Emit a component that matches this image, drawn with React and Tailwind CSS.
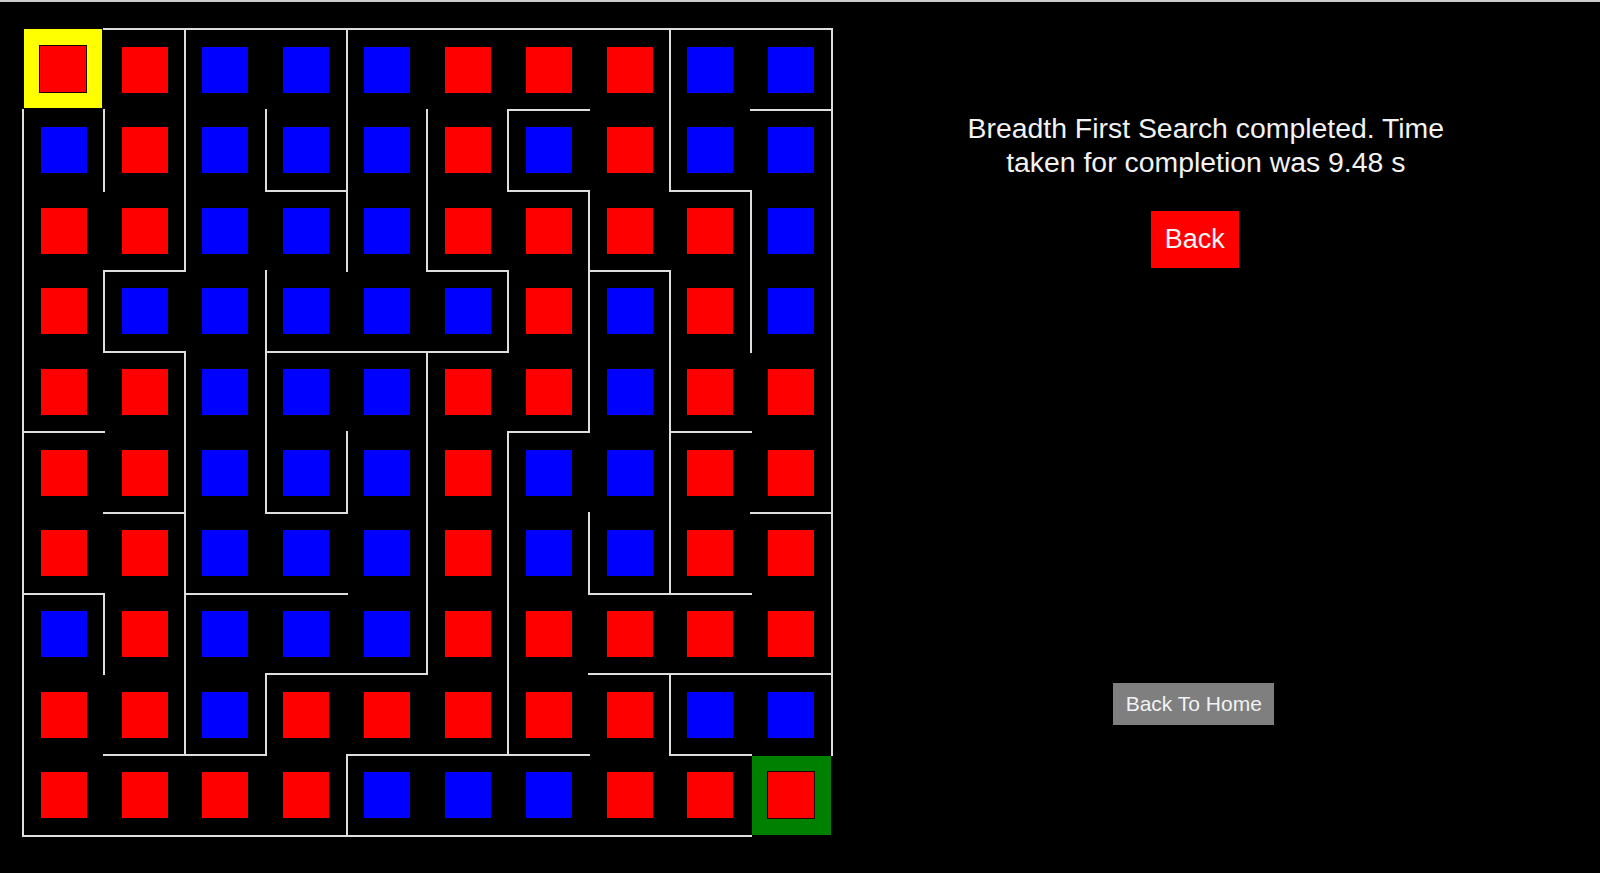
import React from 'react';

// maze colours, one string per row (R = red, B = blue)
const cellColors = [
  'RRBBBRRRBB',
  'BRBBBRBRBB',
  'RRBBBRRRRB',
  'RBBBBBRBRB',
  'RRBBBRRBRR',
  'RRBBBRBBRR',
  'RRBBBRBBRR',
  'BRBBBRRRRR',
  'RRBRRRRRBB',
  'RRRRBBBRRR',
];

// top edge walls, rows 0..10
const topWalls = [
  '0111111111',
  '0000001001',
  '0001001010',
  '0100010100',
  '0101110000',
  '1000001010',
  '0101000001',
  '1011000110',
  '0001100111',
  '0110111010',
  '1111111110',
];

// left edge walls, columns 0..10
const leftWalls = [
  '00101000101',
  '11111110101',
  '10101101011',
  '11010011111',
  '10110101101',
  '10111110101',
  '10100111101',
  '11100110001',
  '10110010101',
  '10001000000',
];

function Cell({ row, col }) {
  const color = cellColors[row][col] === 'R' ? 'bg-[#ff0000]' : 'bg-[#0000ff]';
  const isStart = row === 0 && col === 0;
  const isEnd = row === 9 && col === 9;

  return (
    <div className="relative flex items-center justify-center">
      {topWalls[row][col] === '1' && (
        <span className="absolute -top-px -left-px -right-px h-[2px] bg-[#dedede]" />
      )}
      {leftWalls[row][col] === '1' && (
        <span className="absolute -top-px -bottom-px -left-px w-[2px] bg-[#dedede]" />
      )}
      {col === 9 && leftWalls[row][10] === '1' && (
        <span className="absolute -top-px -bottom-px -right-px w-[2px] bg-[#dedede]" />
      )}
      {row === 9 && topWalls[10][col] === '1' && (
        <span className="absolute -bottom-px -left-px -right-px h-[2px] bg-[#dedede]" />
      )}

      {isStart || isEnd ? (
        <div
          className={`absolute z-10 flex items-center justify-center ${
            isStart ? 'left-px top-0 right-[2px] bottom-[2px] bg-[#ffff00]' : 'left-px top-px right-px bottom-px bg-[#008000]'
          }`}
        >
          <div className="w-[48px] h-[48px] bg-[#ff0000] border border-[#1a0000]" />
        </div>
      ) : (
        <div className={`w-[46px] h-[46px] ${color}`} />
      )}
    </div>
  );
}

export default function App() {
  const cells = [];
  for (let r = 0; r < 10; r++) {
    for (let c = 0; c < 10; c++) {
      cells.push(<Cell key={`${r}-${c}`} row={r} col={c} />);
    }
  }

  return (
    <div
      className="min-h-screen bg-black border-t-2 border-[#cdcdcd] flex"
      style={{ fontFamily: '"Liberation Sans", Arial, sans-serif' }}
    >
      {/* Maze */}
      <div className="ml-[23.3px] mt-[27.3px] grid grid-cols-[repeat(10,80.84px)] grid-rows-[repeat(10,80.64px)] self-start">
        {cells}
      </div>

      {/* Result panel */}
      <div className="flex-1 pr-[44px] flex flex-col items-center">
        <p className="mt-[109px] ml-[24px] text-[28.4px] leading-[34.4px] text-[#f2f2f2] text-center">
          Breadth First Search completed. Time
          <br />
          taken for completion was 9.48 s
        </p>

        <button className="mt-[31px] ml-[2px] w-[88px] h-[57px] bg-[#ff0000] text-[#f5f5f5] text-[27px] flex items-center justify-center">
          Back
        </button>

        <button className="mt-[415px] w-[161px] h-[42px] bg-[#7f7f7f] text-[#f2f2f2] text-[21px] flex items-center justify-center">
          Back To Home
        </button>
      </div>
    </div>
  );
}
